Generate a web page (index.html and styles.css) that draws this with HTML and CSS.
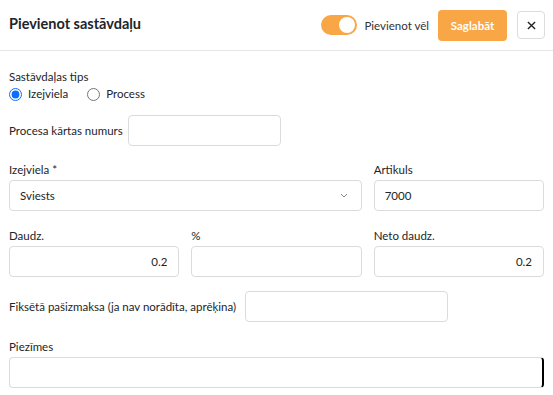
FILE: index.html
```html
<!DOCTYPE html>
<html lang="lv">
<head>
    <meta charset="UTF-8">
    <meta name="viewport" content="width=device-width, initial-scale=1.0">
    <title>Pievienot sastāvdaļu</title>
    <link rel="stylesheet" href="styles.css">
</head>
<body>
    <header class="modal-header">
        <h1 class="modal-title">Pievienot sastāvdaļu</h1>
        <div class="header-actions">
            <label class="switch">
                <span class="switch-track"><span class="switch-knob"></span></span>
                <span class="switch-text">Pievienot vēl</span>
            </label>
            <button class="btn-save" type="button">Saglabāt</button>
            <button class="btn-close" type="button" aria-label="Aizvērt">
                <svg width="9" height="9" viewBox="0 0 10 10"><path d="M1 1 L9 9 M9 1 L1 9" stroke="#222" stroke-width="1.5"/></svg>
            </button>
        </div>
    </header>

    <form class="modal-body">
        <!-- Type of component -->
        <div class="type-group">
            <div class="field-label">Sastāvdaļas tips</div>
            <div class="radio-row">
                <label class="radio"><input type="radio" name="tips" checked> Izejviela</label>
                <label class="radio"><input type="radio" name="tips"> Process</label>
            </div>
        </div>

        <div class="inline-field process-row">
            <label class="inline-label">Procesa kārtas numurs</label>
            <input class="input input-small" type="text">
        </div>

        <div class="grid row-main">
            <div class="field span-2">
                <label class="field-label">Izejviela *</label>
                <div class="select">
                    <span>Sviests</span>
                    <svg width="8" height="5" viewBox="0 0 8 5"><path d="M1 1 L4 4 L7 1" fill="none" stroke="#888" stroke-width="1"/></svg>
                </div>
            </div>
            <div class="field">
                <label class="field-label">Artikuls</label>
                <input class="input" type="text" value="7000">
            </div>
        </div>

        <div class="grid row-amount">
            <div class="field">
                <label class="field-label">Daudz.</label>
                <input class="input num" type="text" value="0.2">
            </div>
            <div class="field">
                <label class="field-label">%</label>
                <input class="input num" type="text">
            </div>
            <div class="field">
                <label class="field-label">Neto daudz.</label>
                <input class="input num" type="text" value="0.2">
            </div>
        </div>

        <div class="inline-field cost-row">
            <label class="inline-label cost-label">Fiksētā pašizmaksa (ja nav norādīta, aprēķina)</label>
            <input class="input input-cost" type="text">
        </div>

        <div class="field notes">
            <label class="field-label">Piezīmes</label>
            <textarea class="input textarea"></textarea>
        </div>
    </form>
</body>
</html>
```

FILE: styles.css
```css
body {
    margin: 0;
    font-family: Lato, "Noto Sans", sans-serif;
    color: #212529;
    background-color: #fff;
    font-size: 11.5px;
}
.modal-header {
    display: flex;
    justify-content: space-between;
    align-items: center;
    height: 51px;
    padding: 0 8px 0 9px;
    border-bottom: 1px solid #e6e6e6;
    box-sizing: border-box;
}
.modal-title {
    margin: 0 0 4px 0;
    font-size: 14.5px;
    font-weight: 700;
}
.header-actions {
    display: flex;
    align-items: center;
}
.switch {
    display: flex;
    align-items: center;
    margin-right: 9px;
}
.switch-track {
    display: flex;
    justify-content: flex-end;
    align-items: center;
    width: 36px;
    height: 20px;
    padding: 0 2px;
    border-radius: 10px;
    background-color: #f9a647;
    box-sizing: border-box;
}
.switch-knob {
    width: 16px;
    height: 16px;
    border-radius: 50%;
    background-color: #fff;
}
.switch-text {
    margin-left: 7px;
    color: #333;
}
.btn-save {
    width: 69px;
    height: 31px;
    border: none;
    border-radius: 4px;
    background-color: #f9a647;
    color: #fff;
    font-family: inherit;
    font-size: 11.5px;
    font-weight: 700;
    cursor: pointer;
}
.btn-close {
    display: flex;
    align-items: center;
    justify-content: center;
    width: 28px;
    height: 28px;
    margin-left: 10px;
    padding: 0;
    border: 1px solid #dcdcdc;
    border-radius: 4px;
    background-color: #fff;
    cursor: pointer;
}
.modal-body {
    padding: 0 9px;
}
.field-label {
    display: block;
    line-height: 16px;
    margin-bottom: 2px;
}
.type-group {
    margin-top: 18px;
}
.type-group .field-label {
    margin-bottom: 1px;
}
.radio-row {
    display: flex;
    gap: 19px;
    line-height: 16px;
}
.radio {
    display: flex;
    align-items: center;
    gap: 6px;
}
.radio input {
    margin: 0;
    width: 13px;
    height: 13px;
    accent-color: #0d6efd;
}
.inline-field {
    display: flex;
    align-items: center;
}
.inline-label {
    margin-right: 5px;
}
.cost-label {
    margin-right: 9px;
}
.process-row {
    margin-top: 13px;
}
.cost-row {
    margin-top: 14px;
}
.input {
    display: block;
    height: 31px;
    width: 100%;
    padding: 0 10px;
    border: 1px solid #d9dcdf;
    border-radius: 4px;
    font-family: inherit;
    font-size: 11.5px;
    color: #212529;
    box-sizing: border-box;
    background-color: #fff;
}
.input-small {
    width: 153px;
}
.input-cost {
    width: 203px;
}
.num {
    text-align: right;
    padding-right: 11px;
}
.grid {
    display: grid;
    grid-template-columns: 1fr 1fr 1fr;
    gap: 12px;
}
.span-2 {
    grid-column: span 2;
}
.row-main {
    margin-top: 16px;
}
.row-amount {
    margin-top: 17px;
}
.select {
    display: flex;
    justify-content: space-between;
    align-items: center;
    height: 31px;
    padding: 0 13px 0 10px;
    border: 1px solid #d9dcdf;
    border-radius: 4px;
    box-sizing: border-box;
}
.notes {
    margin-top: 17px;
}
.textarea {
    resize: none;
    border-right: 2px solid #000;
}
```
